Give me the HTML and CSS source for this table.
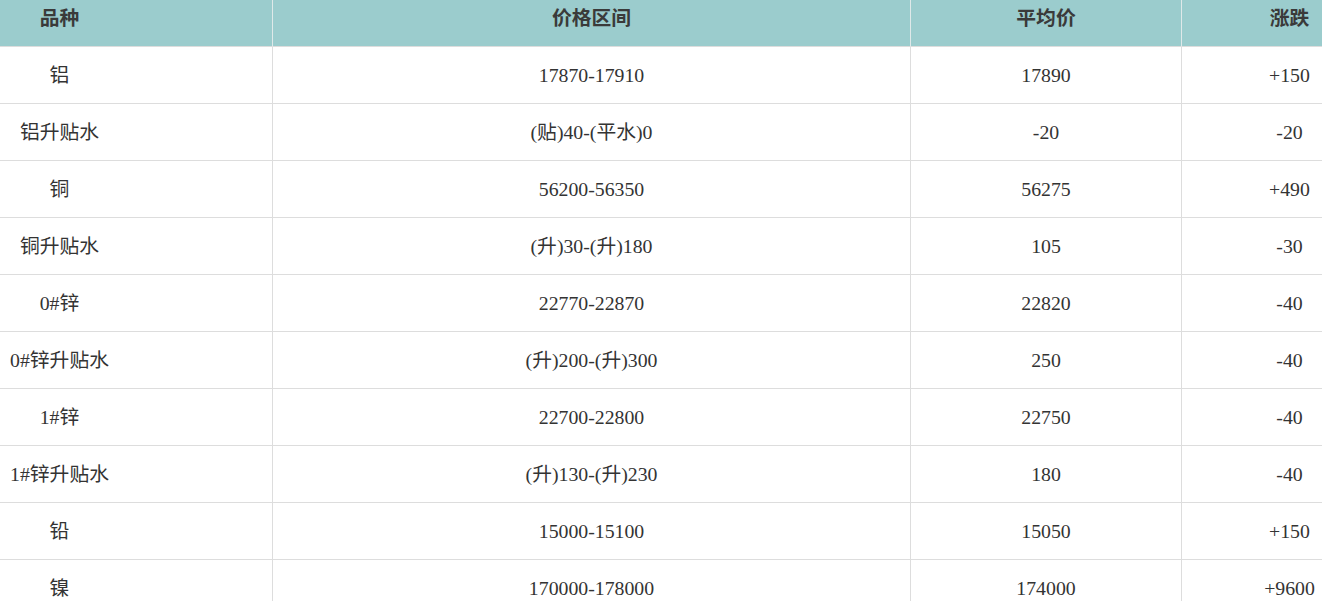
FILE: index.html
```html
<!DOCTYPE html>
<html lang="zh">
<head>
<meta charset="utf-8">
<title>价格表</title>
<link rel="stylesheet" href="styles.css">
</head>
<body>
<div class="wrap">
<table class="price">
<colgroup>
<col class="c1"><col class="c2"><col class="c3"><col class="c4">
</colgroup>
<thead>
<tr><th class="name">品种</th><th>价格区间</th><th>平均价</th><th>涨跌</th></tr>
</thead>
<tbody>
<tr><td class="name">铝</td><td>17870-17910</td><td>17890</td><td>+150</td></tr>
<tr><td class="name">铝升贴水</td><td>(贴)40-(平水)0</td><td>-20</td><td>-20</td></tr>
<tr><td class="name">铜</td><td>56200-56350</td><td>56275</td><td>+490</td></tr>
<tr><td class="name">铜升贴水</td><td>(升)30-(升)180</td><td>105</td><td>-30</td></tr>
<tr><td class="name">0#锌</td><td>22770-22870</td><td>22820</td><td>-40</td></tr>
<tr><td class="name">0#锌升贴水</td><td>(升)200-(升)300</td><td>250</td><td>-40</td></tr>
<tr><td class="name">1#锌</td><td>22700-22800</td><td>22750</td><td>-40</td></tr>
<tr><td class="name">1#锌升贴水</td><td>(升)130-(升)230</td><td>180</td><td>-40</td></tr>
<tr><td class="name">铅</td><td>15000-15100</td><td>15050</td><td>+150</td></tr>
<tr><td class="name">镍</td><td>170000-178000</td><td>174000</td><td>+9600</td></tr>
</tbody>
</table>
</div>
</body>
</html>
```

FILE: styles.css
```css
html, body {
  margin: 0;
  padding: 0;
  overflow: hidden;
  background: #fff;
}
.wrap {
  width: 1322px;
  height: 601px;
  overflow: hidden;
}
.price {
  border-collapse: separate;
  border-spacing: 0;
  table-layout: fixed;
  width: 1397px;
  font-family: "Liberation Serif", "Noto Sans CJK SC", serif;
  font-size: 19.8px;
  color: #333;
}
.c1 { width: 273px; }
.c2 { width: 638px; }
.c3 { width: 271px; }
.c4 { width: 215px; }
.price th {
  background: #9bcccd;
  color: #3a3a3a;
  font-weight: bold;
  line-height: 20px;
  padding: 8px 0 18px;
  text-align: center;
  border-right: 1px solid #dfe9e9;
  border-bottom: 1px solid #dddddd;
}
.price td {
  line-height: 20px;
  padding: 18px 0;
  text-align: center;
  border-right: 1px solid #dddddd;
  border-bottom: 1px solid #dddddd;
}
.price th:last-child, .price td:last-child {
  border-right: none;
}
.price .name {
  padding-right: 153px;
}
```
